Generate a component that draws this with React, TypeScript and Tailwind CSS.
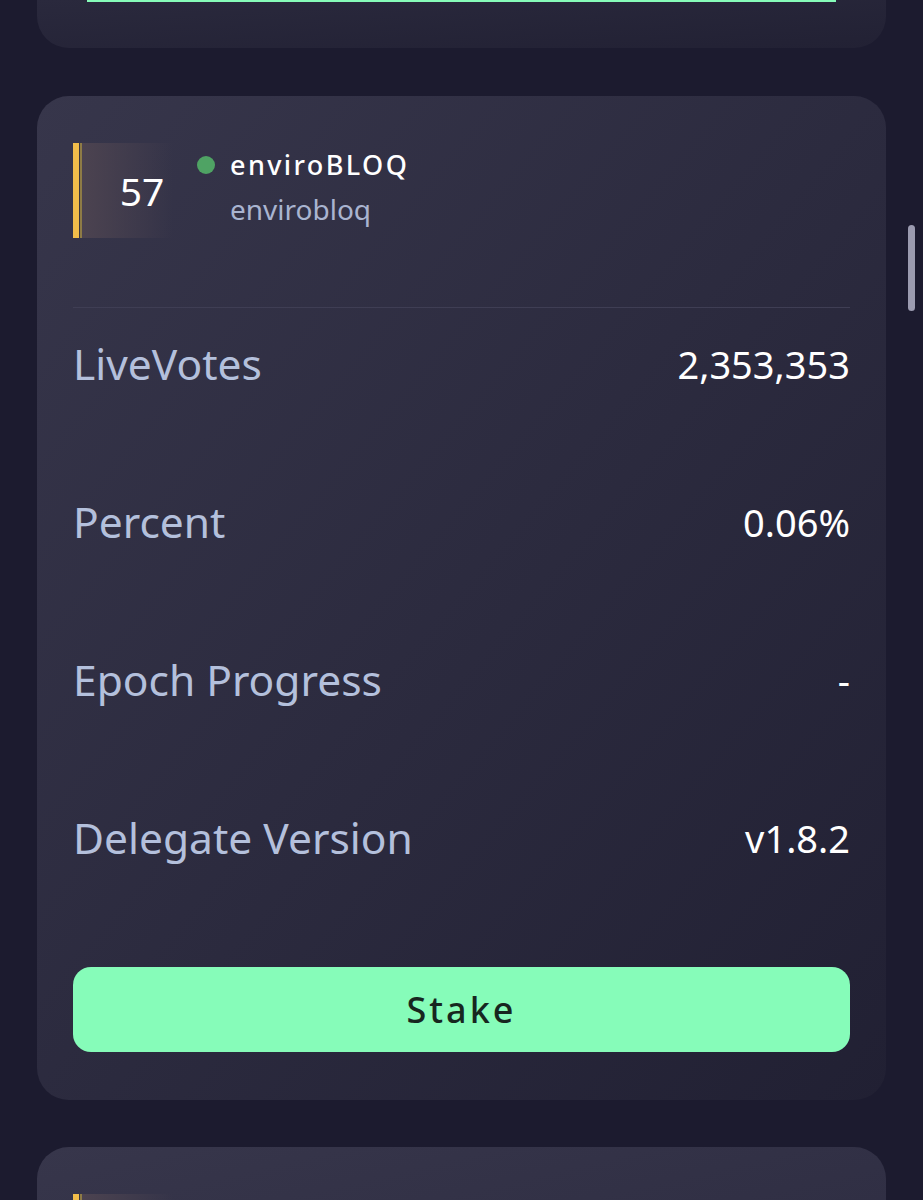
import React from "react";

type Delegate = {
  rank: number;
  name: string;
  handle: string;
  online: boolean;
  stats: { label: string; value: string }[];
};

const delegates: Delegate[] = [
  {
    rank: 57,
    name: "enviroBLOQ",
    handle: "envirobloq",
    online: true,
    stats: [
      { label: "LiveVotes", value: "2,353,353" },
      { label: "Percent", value: "0.06%" },
      { label: "Epoch Progress", value: "-" },
      { label: "Delegate Version", value: "v1.8.2" },
    ],
  },
];

function RankBar({ children }: { children?: React.ReactNode }) {
  return (
    <div className="flex h-[95px] w-[100px] items-stretch">
      <div className="w-[6px] bg-[#f2bd4a]" />
      <div className="w-[1px] bg-[#3a3640]" />
      <div className="w-[2px] bg-[#8e7b45]" />
      <div className="flex flex-1 items-center justify-center bg-gradient-to-r from-[#4c4350] to-transparent pl-[29px]">
        {children}
      </div>
    </div>
  );
}

function DelegateCard({ d }: { d: Delegate }) {
  return (
    <div className="rounded-[32px] bg-gradient-to-br from-[#37364b] to-[#212033] px-[36px] pb-[48px] pt-[47px]">
      <div className="flex items-start">
        <RankBar>
          <span className="text-[39px] leading-none text-white">{d.rank}</span>
        </RankBar>
        <div className="ml-[24px] pt-[6px]">
          <div className="flex items-center">
            <span className="h-[18px] w-[18px] rounded-full bg-[#4fa364]" />
            <span className="ml-[15px] text-[27px] font-medium leading-[32px] tracking-[2.4px] text-white">
              {d.name}
            </span>
          </div>
          <div className="ml-[33px] mt-[9px] text-[28px] leading-[38px] text-[#a9b4d0]">
            {d.handle}
          </div>
        </div>
      </div>

      <div className="mt-[69px] h-px bg-[#3f3e54]" />

      <div className="mt-[32px] flex flex-col gap-[110px]">
        {d.stats.map((s) => (
          <div key={s.label} className="flex h-[48px] items-center justify-between">
            <span className="text-[42.5px] leading-none text-[#b4c0dc]">{s.label}</span>
            <span className="text-[38px] leading-none text-white">{s.value}</span>
          </div>
        ))}
      </div>

      <button className="mt-[105px] flex h-[85px] w-full items-center justify-center rounded-[18px] bg-[#86fcb9] text-[36px] font-medium tracking-[3px] text-[#17261f]">
        Stake
      </button>
    </div>
  );
}

export default function App() {
  return (
    <div
      className="relative h-[1200px] overflow-hidden bg-[#1c1b2f] px-[37px]"
      style={{ fontFamily: '"Noto Sans", "Open Sans", sans-serif' }}
    >
      {/* previous card, mostly scrolled away */}
      <div className="h-[48px] rounded-b-[32px] bg-gradient-to-br from-[#2a293d] to-[#222134]">
        <div className="mx-[50px] h-[2px] bg-[#86fcb9]" />
      </div>

      <div className="mt-[48px] flex flex-col gap-[47px]">
        {delegates.map((d) => (
          <DelegateCard key={d.rank} d={d} />
        ))}
        <div className="h-[200px] rounded-t-[32px] bg-gradient-to-br from-[#37364b] to-[#2c2b40] px-[36px] pt-[47px]">
          <RankBar />
        </div>
      </div>

      {/* scroll indicator */}
      <div className="absolute right-[8px] top-[225px] h-[86px] w-[7px] rounded-full bg-[#9b9bb0]" />
    </div>
  );
}
